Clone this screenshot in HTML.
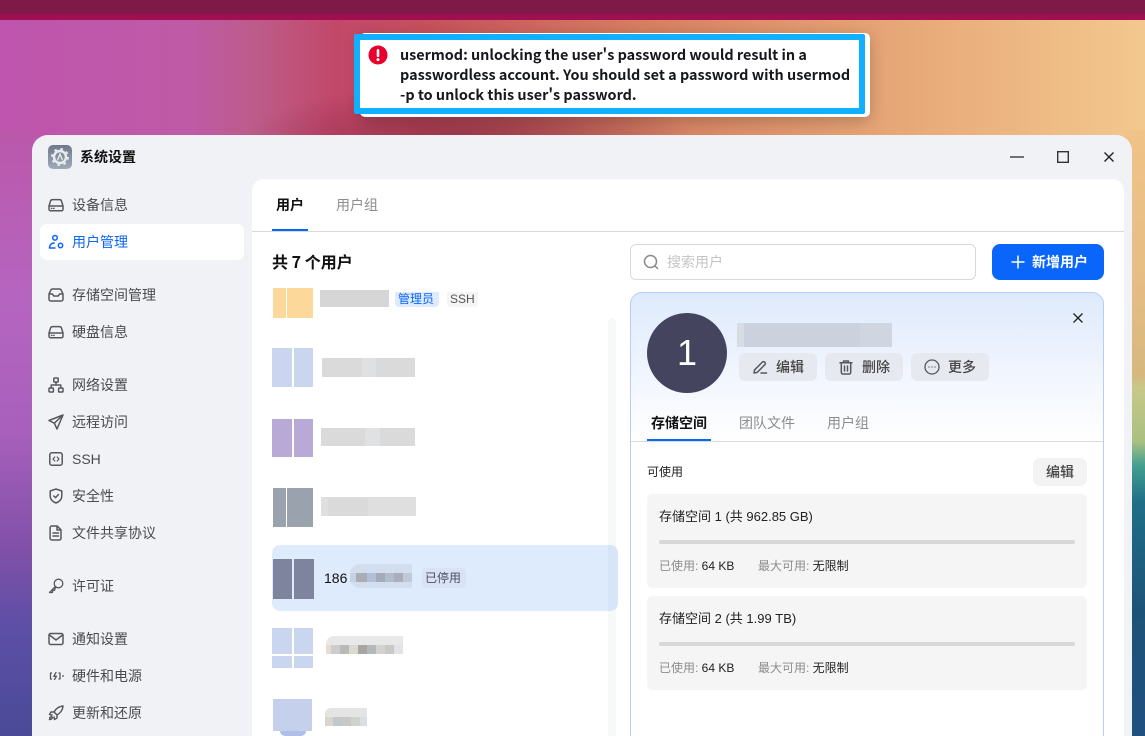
<!DOCTYPE html>
<html lang="zh"><head><meta charset="utf-8"><title>系统设置</title>
<style>
*{box-sizing:border-box}
html,body{margin:0;padding:0;width:1145px;height:736px;overflow:hidden;background:#c05a80}
body{position:relative;font-family:"Liberation Sans","Noto Sans CJK SC",sans-serif;font-size:14px;color:#111}
.a,.t,svg.i{position:absolute}
.t{line-height:20px;height:20px;white-space:nowrap;font-family:"Noto Sans CJK SC","Liberation Sans",sans-serif}
.l{font-family:"Liberation Sans","Noto Sans CJK SC",sans-serif}
.s{left:72px;color:#4a4a50;font-size:14px}
svg.i{fill:none;stroke:#55585e;stroke-width:1.5;stroke-linecap:round;stroke-linejoin:round}
.r{position:absolute}
</style></head><body>
<div class="a" style="left:0;top:20px;width:1145px;height:130px;background:linear-gradient(90deg,#bf55ae 0,#bf5aa6 190px,#bd5c8a 255px,#c2486a 335px,#c6525c 430px,#d67f62 640px,#e5a274 860px,#f3c88e 1145px)"></div>
<div class="a" style="left:200px;top:50px;width:600px;height:100px;background:radial-gradient(ellipse 230px 60px at 270px 92px,rgba(120,30,60,.62),rgba(120,30,60,0))"></div>
<div class="a" style="left:0;top:0;width:1145px;height:14px;background:#7f1947"></div>
<div class="a" style="left:0;top:14px;width:1145px;height:6px;background:#a01050"></div>
<div class="a" style="left:0;top:130px;width:40px;height:606px;background:linear-gradient(180deg,#bb58ab 0,#b565c0 170px,#a860bc 300px,#8050a8 420px,#5c4fa6 500px,#4a4a98 606px)"></div>
<div class="a" style="left:1125px;top:130px;width:20px;height:606px;background:linear-gradient(180deg,#f0c388 0,#e6bd84 150px,#d6b87e 245px,#c8c888 258px,#a8c080 312px,#45a090 335px,#1f6f88 372px,#1d5278 480px,#205080 606px)"></div>

<!-- toast -->
<div class="a" style="left:360px;top:33px;width:510px;height:84px;background:#fff;border-radius:5px;box-shadow:0 4px 16px rgba(0,0,0,.22)"></div>
<div class="a" style="left:354px;top:34px;width:511px;height:80px;border:6px solid #10b0ff;border-radius:2px;background:#fff"></div>
<svg class="a" style="left:368px;top:45px" width="20" height="20" viewBox="0 0 20 20"><circle cx="10" cy="10" r="9.500" fill="#e8002d"/><rect x="8.700" y="4" width="2.600" height="8" rx="1.300" fill="#fff"/><circle cx="10" cy="14.600" r="1.500" fill="#fff"/></svg>
<div class="t" style="left:400px;top:45px;font-weight:700;font-size:14.400px;color:#16181d">usermod: unlocking the user's password would result in a</div>
<div class="t" style="left:400px;top:65px;font-weight:700;font-size:14.400px;color:#16181d">passwordless account. You should set a password with usermod</div>
<div class="t" style="left:400px;top:85px;font-weight:700;font-size:14.400px;color:#16181d">-p to unlock this user's password.</div>

<!-- window -->
<div class="a" style="left:32px;top:135px;width:1100px;height:620px;background:#f1f2f5;border-radius:16px 16px 0 0"></div>
<div class="a" style="left:48px;top:145px;width:24px;height:24px;border-radius:5px;background:linear-gradient(180deg,#6d7a8c,#a0a9b6)"></div>
<svg class="a" style="left:48px;top:145px" width="24" height="24" viewBox="0 0 24 24"><circle cx="12" cy="12" r="6" fill="none" stroke="#e8ebef" stroke-width="2.400"/><circle cx="12" cy="12" r="8" fill="none" stroke="#e8ebef" stroke-width="2" stroke-dasharray="2.600 3.700"/><path d="M9.600 15L12 9l2.400 6" fill="none" stroke="#e8ebef" stroke-width="1.400"/></svg>
<div class="t" style="left:80px;top:147px;font-weight:700;font-size:14px;color:#111">系统设置</div>
<svg class="a" style="left:1010px;top:150px" width="14" height="14" viewBox="0 0 14 14"><path d="M0 7h14" stroke="#444" stroke-width="1.500"/></svg>
<svg class="a" style="left:1057px;top:151px" width="12" height="12" viewBox="0 0 12 12"><rect x=".7" y=".7" width="10.600" height="10.600" fill="none" stroke="#333" stroke-width="1.400"/></svg>
<svg class="a" style="left:1104px;top:152px" width="10" height="10" viewBox="0 0 10 10"><path d="M.5.500l9 9M9.500.500l-9 9" stroke="#222" stroke-width="1.400"/></svg>

<!-- sidebar -->
<div class="a" style="left:40px;top:224px;width:204px;height:36px;background:#fff;border-radius:7px"></div>
<svg class="i" style="left:48px;top:197px" width="16" height="16" viewBox="0 0 16 16"><path d="M1 9l1.600-5.200A2 2 0 0 1 4.500 2.600h7a2 2 0 0 1 1.900 1.200L15 9M1 9h14v3.200a1.600 1.600 0 0 1-1.600 1.600H2.600A1.600 1.600 0 0 1 1 12.200zM3.500 11.400h.3M5.700 11.400h.3"/></svg>
<div class="t s" style="top:195px">设备信息</div>
<svg class="i" style="left:48px;top:234px;stroke:#0a66f5" width="16" height="16" viewBox="0 0 16 16"><circle cx="7" cy="3.800" r="2.300"/><path d="M1.500 14c0-2.800 1.800-4.800 4.600-5M7 14H1.500"/><circle cx="12.500" cy="11.500" r="2.200"/></svg>
<div class="t s" style="top:232px;color:#0a66f5">用户管理</div>
<svg class="i" style="left:48px;top:287px" width="16" height="16" viewBox="0 0 16 16"><path d="M1 7l2-4.200A1.500 1.500 0 0 1 4.400 2h7.200a1.500 1.500 0 0 1 1.400.8L15 7v5.200a1.800 1.800 0 0 1-1.800 1.800H2.800A1.800 1.800 0 0 1 1 12.200zM1 7h3.500l1.200 2h4.600l1.200-2H15"/></svg>
<div class="t s" style="top:285px">存储空间管理</div>
<svg class="i" style="left:48px;top:324px" width="16" height="16" viewBox="0 0 16 16"><path d="M1 9l1.600-5.200A2 2 0 0 1 4.500 2.600h7a2 2 0 0 1 1.900 1.200L15 9M1 9h14v3.200a1.600 1.600 0 0 1-1.600 1.600H2.600A1.600 1.600 0 0 1 1 12.200zM3.500 11.400h.3M5.700 11.400h.3"/></svg>
<div class="t s" style="top:322px">硬盘信息</div>
<svg class="i" style="left:48px;top:377px" width="16" height="16" viewBox="0 0 16 16"><rect x="5.800" y="1" width="4.400" height="4" rx=".8"/><rect x="1" y="11" width="4.400" height="4" rx=".8"/><rect x="10.600" y="11" width="4.400" height="4" rx=".8"/><path d="M8 5v3M3.200 11V8h9.600v3"/></svg>
<div class="t s" style="top:375px">网络设置</div>
<svg class="i" style="left:48px;top:414px" width="16" height="16" viewBox="0 0 16 16"><path d="M15 1L1 6.500l5.300 2.700L9 15zM15 1L6.300 9.200"/></svg>
<div class="t s" style="top:412px">远程访问</div>
<svg class="i" style="left:48px;top:451px" width="16" height="16" viewBox="0 0 16 16"><rect x="1.800" y="1.800" width="12.400" height="12.400" rx="2"/><path d="M6.800 6L5 8l1.800 2M9.200 6L11 8l-1.800 2" stroke-width="1.200"/></svg>
<div class="t s l" style="top:449px">SSH</div>
<svg class="i" style="left:48px;top:488px" width="16" height="16" viewBox="0 0 16 16"><path d="M8 1l5.800 2v5c0 3.300-2.400 5.700-5.800 7-3.400-1.300-5.800-3.700-5.800-7V3zM5.800 8l1.700 1.600 2.900-3"/></svg>
<div class="t s" style="top:486px">安全性</div>
<svg class="i" style="left:48px;top:525px" width="16" height="16" viewBox="0 0 16 16"><path d="M3.800 1h5.400L13 4.800v8.500a1.700 1.700 0 0 1-1.700 1.700H3.800a1.700 1.700 0 0 1-1.700-1.700V2.700A1.700 1.700 0 0 1 3.800 1zM9 1v4h4M5 8h5.500M5 11h5.500"/></svg>
<div class="t s" style="top:523px">文件共享协议</div>
<svg class="i" style="left:48px;top:578px;stroke-width:1.300" width="16" height="16" viewBox="0 0 16 16"><circle cx="10.500" cy="5.500" r="4.300"/><path d="M7.400 8.500L1.500 14.500h3l.3-2 1.800-.3.3-1.700 1-1"/></svg>
<div class="t s" style="top:576px">许可证</div>
<svg class="i" style="left:48px;top:631px" width="16" height="16" viewBox="0 0 16 16"><rect x="1" y="2.500" width="14" height="11" rx="1.600"/><path d="M1.500 4L8 9l6.500-5"/></svg>
<div class="t s" style="top:629px">通知设置</div>
<svg class="i" style="left:48px;top:668px" width="16" height="16" viewBox="0 0 16 16"><path d="M3.500 5H2.500v6h1M11 5h1v6h-1M8 4.500L5.800 8.300h2.700L6.500 11.500M15 7.500v1" stroke-width="1.300"/></svg>
<div class="t s" style="top:666px">硬件和电源</div>
<svg class="i" style="left:48px;top:705px" width="16" height="16" viewBox="0 0 16 16"><path d="M15 1c-4 .3-7 2.500-9 6l3 3c3.500-2 5.700-5 6-9zM6 7H3L1.500 9.500 4 10M9 10v3l-2.500 1.500L6 12"/><path d="M3.500 11.500c-1.300.5-2 1.700-2 3 1.300 0 2.500-.7 3-2z"/></svg>
<div class="t s" style="top:703px">更新和还原</div>

<!-- main panel -->
<div class="a" style="left:252px;top:179px;width:872px;height:580px;background:#fff;border-radius:12px 12px 0 0"></div>
<div class="t" style="left:276px;top:195px;font-weight:700;color:#111;font-size:14px">用户</div>
<div class="t" style="left:336px;top:195px;color:#8d8d8d;font-size:14px">用户组</div>
<div class="r" style="left:252px;top:231px;width:872px;height:1px;background:#d9d9d9"></div>
<div class="r" style="left:272px;top:229px;width:36px;height:2px;background:#0a66f5"></div>
<div class="t" style="left:272px;top:251px;font-weight:700;font-size:16px;color:#111">共 7 个用户</div>

<div class="r" style="left:608px;top:318px;width:8px;height:418px;background:#f7f8f8;border-radius:4px 4px 0 0"></div>

<!-- list -->
<div class="r" style="left:273px;top:288px;width:13px;height:30px;background:#fdd89b"></div>
<div class="r" style="left:287px;top:288px;width:26px;height:30px;background:#fdd89b"></div>
<div class="r" style="left:320px;top:290px;width:69px;height:17px;background:#d6d6d6"></div>
<div class="r" style="left:395px;top:292px;width:44px;height:15px;background:#deebff;border-radius:0 0 4px 4px"></div>
<div class="t" style="left:398px;top:289px;font-size:12px;color:#0a66f5">管理员</div>
<div class="r" style="left:447px;top:292px;width:31px;height:15px;background:#f5f5f5;border-radius:0 0 4px 4px"></div>
<div class="t l" style="left:450px;top:289px;font-size:12px;color:#555">SSH</div>

<div class="r" style="left:272px;top:348px;width:20px;height:39px;background:#cad6ef"></div>
<div class="r" style="left:294px;top:348px;width:19px;height:39px;background:#cad6ef"></div>
<div class="r" style="left:322px;top:358px;width:93px;height:19px;background:#dadada"></div>
<div class="r" style="left:362px;top:358px;width:14px;height:19px;background:#dfe0e1"></div>

<div class="r" style="left:272px;top:419px;width:20px;height:38px;background:#b8a9d6"></div>
<div class="r" style="left:294px;top:419px;width:19px;height:38px;background:#b8a9d6"></div>
<div class="r" style="left:321px;top:428px;width:94px;height:18px;background:#dadada"></div>
<div class="r" style="left:365px;top:428px;width:15px;height:18px;background:#e0e1e2"></div>

<div class="r" style="left:273px;top:488px;width:13px;height:39px;background:#9aa2ad"></div>
<div class="r" style="left:287px;top:488px;width:26px;height:39px;background:#9aa2ad"></div>
<div class="r" style="left:321px;top:497px;width:95px;height:19px;background:#dfdfdf"></div>
<div class="r" style="left:328px;top:497px;width:40px;height:19px;background:#dadada"></div>

<div class="r" style="left:272px;top:545px;width:346px;height:66px;background:#deebfd;border-radius:8px"></div>
<div class="r" style="left:608px;top:545px;width:10px;height:66px;background:#d8e5f8;border-radius:0 8px 8px 0"></div>
<div class="r" style="left:273px;top:559px;width:19px;height:40px;background:#7f849e"></div>
<div class="r" style="left:294px;top:559px;width:20px;height:40px;background:#7f849e"></div>
<div class="t l" style="left:324px;top:568px;color:#111;font-size:14px">186</div>
<div class="r" style="left:350px;top:564px;width:62px;height:24px;background:#d2ddee;border-radius:10px 0 0 10px"></div>
<div class="r" style="left:350px;top:573px;width:62px;height:9px;background:linear-gradient(90deg,#c6d2e4 0 6px,#aaadb4 6px 17px,#b1c0d6 17px 26px,#a3abba 26px 35px,#b2bccb 35px 44px,#a8aebb 44px 53px,#c0c9d8 53px)"></div>
<div class="r" style="left:422px;top:568px;width:44px;height:20px;background:#d9e3f5;border-radius:4px"></div>
<div class="t" style="left:425px;top:568px;font-size:12px;color:#4a4f60">已停用</div>

<div class="r" style="left:272px;top:628px;width:20px;height:26px;background:#cad6ef"></div>
<div class="r" style="left:294px;top:628px;width:19px;height:26px;background:#cad6ef"></div>
<div class="r" style="left:272px;top:656px;width:20px;height:12px;background:#cad6ef"></div>
<div class="r" style="left:294px;top:656px;width:19px;height:12px;background:#cad6ef"></div>
<div class="r" style="left:326px;top:636px;width:77px;height:9px;background:#e8e8e8;border-radius:8px 0 0 0"></div>
<div class="r" style="left:326px;top:645px;width:77px;height:9px;background:linear-gradient(90deg,#e8dcd0 0 5px,#cdcdcd 5px 14px,#b9b9b9 14px 23px,#dcd8d2 23px 32px,#a9a5a3 32px 41px,#b3b8ba 41px 50px,#d2d2d2 50px 59px,#c8c8c4 59px 68px,#e2e3e6 68px)"></div>

<div class="r" style="left:273px;top:699px;width:39px;height:32px;background:#c5d0ec"></div>
<div class="r" style="left:280px;top:731px;width:26px;height:5px;background:#aec0ea;border-radius:0 0 14px 14px"></div>
<div class="r" style="left:325px;top:708px;width:42px;height:9px;background:#e4e4e4;border-radius:6px 0 0 0"></div>
<div class="r" style="left:325px;top:717px;width:42px;height:9px;background:linear-gradient(90deg,#d9d6d0 0 8px,#c4c8cc 8px 17px,#c9c9c9 17px 26px,#d0d2cc 26px 35px,#dcdfe1 35px)"></div>

<!-- search -->
<div class="r" style="left:630px;top:244px;width:346px;height:36px;border:1px solid #d9d9d9;border-radius:6px;background:#fff"></div>
<svg class="i" style="left:643px;top:254px;stroke:#8a8a8a" width="16" height="16" viewBox="0 0 16 16"><circle cx="7.500" cy="7.500" r="6"/><path d="M12 12l2.500 2.500"/></svg>
<div class="t" style="left:667px;top:252px;color:#c4c4c4;font-size:14px">搜索用户</div>
<div class="r" style="left:992px;top:244px;width:112px;height:36px;background:#0a66fa;border-radius:8px"></div>
<svg class="a" style="left:1011px;top:255px" width="14" height="14" viewBox="0 0 14 14"><path d="M7 .5v13M.5 7h13" stroke="#fff" stroke-width="1.500"/></svg>
<div class="t" style="left:1032px;top:252px;color:#fff;font-weight:700;font-size:14px">新增用户</div>

<!-- detail card -->
<div class="r" style="left:630px;top:292px;width:474px;height:480px;border:1px solid #b3d0fb;border-radius:12px;background:linear-gradient(180deg,#deeafc 0,#f2f6fe 85px,#fff 150px)"></div>
<div class="r" style="left:647px;top:313px;width:80px;height:80px;border-radius:50%;background:#44445e"></div>
<div class="t l" style="left:647px;top:333px;width:80px;height:40px;line-height:40px;text-align:center;color:#fff;font-size:36px">1</div>
<div class="r" style="left:737px;top:323px;width:155px;height:24px;background:#ccd2dd"></div>
<div class="r" style="left:737px;top:323px;width:7px;height:24px;background:#d8dce4"></div>
<div class="r" style="left:860px;top:323px;width:32px;height:24px;background:#d0d6e0"></div>

<div class="r" style="left:739px;top:353px;width:78px;height:28px;background:#e6e9f0;border-radius:6px"></div>
<div class="r" style="left:825px;top:353px;width:78px;height:28px;background:#e6e9f0;border-radius:6px"></div>
<div class="r" style="left:911px;top:353px;width:78px;height:28px;background:#e6e9f0;border-radius:6px"></div>
<svg class="i" style="left:752px;top:359px" width="16" height="16" viewBox="0 0 16 16"><path d="M2 14l.6-3.200L10.500 3a1.400 1.400 0 0 1 2 0l.5.500a1.400 1.400 0 0 1 0 2L5.200 13.400zM9 14h5.500"/></svg>
<div class="t" style="left:776px;top:357px;font-size:14px;color:#444;font-weight:500">编辑</div>
<svg class="i" style="left:838px;top:359px" width="16" height="16" viewBox="0 0 16 16"><path d="M2 3.800h12M5.500 3.500V2h5v1.500M3.300 4v9.500A1.500 1.500 0 0 0 4.800 15h6.400a1.500 1.500 0 0 0 1.500-1.500V4M6.500 7v5M9.500 7v5"/></svg>
<div class="t" style="left:862px;top:357px;font-size:14px;color:#444;font-weight:500">删除</div>
<svg class="i" style="left:924px;top:359px;stroke-width:1.300" width="16" height="16" viewBox="0 0 16 16"><circle cx="8" cy="8" r="7"/><path d="M5 8h.1M8 8h.1M11 8h.1"/></svg>
<div class="t" style="left:948px;top:357px;font-size:14px;color:#444;font-weight:500">更多</div>
<svg class="a" style="left:1073px;top:313px" width="10" height="10" viewBox="0 0 10 10"><path d="M.5.500l9 9M9.500.500l-9 9" stroke="#222" stroke-width="1.300"/></svg>

<div class="t" style="left:651px;top:413px;font-weight:700;font-size:14px;color:#111">存储空间</div>
<div class="t" style="left:739px;top:413px;color:#8d8d8d;font-size:14px">团队文件</div>
<div class="t" style="left:827px;top:413px;color:#8d8d8d;font-size:14px">用户组</div>
<div class="r" style="left:631px;top:441px;width:472px;height:1px;background:#d8dbe0"></div>
<div class="r" style="left:647px;top:439px;width:64px;height:2px;background:#0a66f5"></div>

<div class="t" style="left:647px;top:462px;font-size:12px;color:#222">可使用</div>
<div class="r" style="left:1033px;top:458px;width:54px;height:28px;background:#f3f3f3;border-radius:7px"></div>
<div class="t" style="left:1046px;top:462px;font-size:14px;color:#444;font-weight:500">编辑</div>

<div class="r" style="left:647px;top:494px;width:440px;height:94px;background:#f5f5f5;border-radius:5px"></div>
<div class="t l" style="left:659px;top:507px;font-size:13px;color:#222">存储空间 1 (共 962.85 GB)</div>
<div class="r" style="left:659px;top:540px;width:416px;height:4px;background:#d8d8d8;border-radius:2px"></div>
<div class="t l" style="left:659px;top:556px;font-size:12px;color:#8c8c8c">已使用: <span style="color:#222">64 KB</span></div>
<div class="t l" style="left:758px;top:556px;font-size:12px;color:#8c8c8c">最大可用: <span style="color:#222">无限制</span></div>

<div class="r" style="left:647px;top:596px;width:440px;height:94px;background:#f5f5f5;border-radius:5px"></div>
<div class="t l" style="left:659px;top:609px;font-size:13px;color:#222">存储空间 2 (共 1.99 TB)</div>
<div class="r" style="left:659px;top:642px;width:416px;height:4px;background:#d8d8d8;border-radius:2px"></div>
<div class="t l" style="left:659px;top:658px;font-size:12px;color:#8c8c8c">已使用: <span style="color:#222">64 KB</span></div>
<div class="t l" style="left:758px;top:658px;font-size:12px;color:#8c8c8c">最大可用: <span style="color:#222">无限制</span></div>
</body></html>
